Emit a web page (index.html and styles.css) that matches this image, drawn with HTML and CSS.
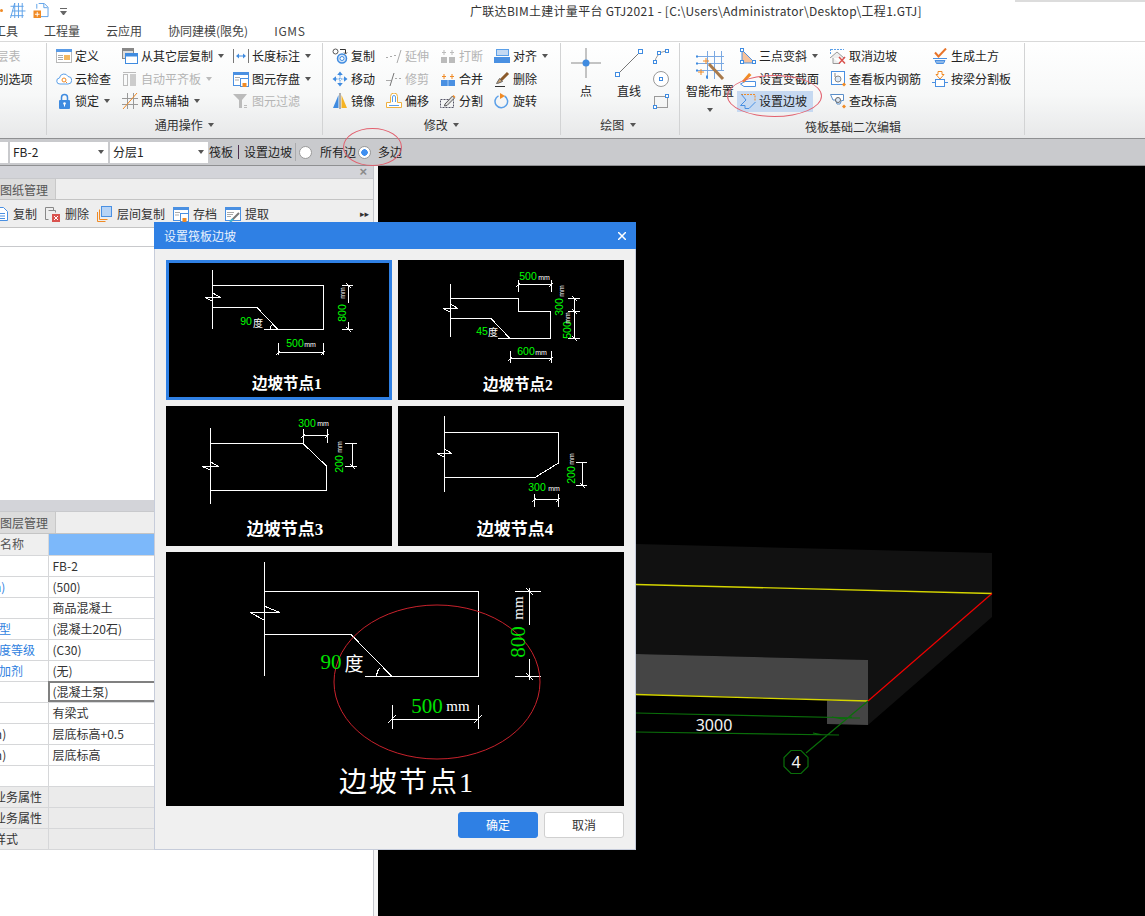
FILE: index.html
```html
<!DOCTYPE html>
<html lang="zh-CN">
<head>
<meta charset="utf-8">
<title>广联达BIM土建计量平台 GTJ2021</title>
<link rel="stylesheet" href="styles.css">
</head>
<body>
<svg class="sprite" aria-hidden="true">
<symbol id="i-def" viewBox="0 0 16 16"><rect x=".5" y="1.5" width="15" height="13" fill="#fff" stroke="#b8b8b8"/><rect y="1" width="16" height="3" fill="#5a9be6"/><path d="M2 7.5h5M2 9.5h5M2 11.5h5" stroke="#aaa"/><rect x="8" y="7" width="6" height="5" fill="#f4b860"/></symbol>
<symbol id="i-cloud" viewBox="0 0 16 16"><path d="M4 13a3 3 0 0 1-.5-6 4.500 4.500 0 0 1 8.500-1.500 3.700 3.700 0 0 1 0 7.500z" fill="#fff" stroke="#5a9fe8"/><circle cx="8" cy="9" r="2" fill="none" stroke="#f08a24"/><path d="M9.500 10.500l1.500 1.500" stroke="#f08a24"/></symbol>
<symbol id="i-lock" viewBox="0 0 16 16"><rect x="3" y="7" width="11" height="9" rx="1" fill="#3f8be0"/><path d="M5.500 7V4.500a3 3 0 0 1 6 0V7" fill="none" stroke="#3f8be0" stroke-width="1.500"/><circle cx="8.500" cy="10.500" r="1.300" fill="#fff"/><path d="M8.500 11v2.500" stroke="#fff"/></symbol>
<symbol id="i-floor" viewBox="0 0 16 16"><rect x=".5" y=".5" width="11" height="10" fill="#ddd" stroke="#888"/><rect width="12" height="3" fill="#888"/><rect x="3.500" y="5.500" width="12" height="10" fill="#fff" stroke="#3f8be0"/><rect x="3" y="5" width="13" height="3.500" fill="#3f8be0"/></symbol>
<symbol id="i-flush" viewBox="0 0 16 16"><path d="M1 1.500h13" stroke="#bbb"/><rect x="1.500" y="3.500" width="4" height="11" fill="none" stroke="#bbb"/><rect x="8" y="3" width="6" height="12" fill="#ccc"/></symbol>
<symbol id="i-axis" viewBox="0 0 16 16"><path d="M5.500 0v16M11.500 0v16M0 5.500h16M0 11.500h16" stroke="#999"/><path d="M1 16L15 0" stroke="#f08a24"/></symbol>
<symbol id="i-len" viewBox="0 0 16 16"><path d="M.5 1v14M15.500 1v14" stroke="#777"/><path d="M4 8h8" stroke="#3f8be0"/><path d="M3 8l3-2.500v5zM13 8l-3-2.500v5z" fill="#3f8be0"/></symbol>
<symbol id="i-save" viewBox="0 0 16 16"><rect x=".5" y="1.500" width="15" height="13" fill="#fff" stroke="#4a90e2"/><rect y="1" width="16" height="3" fill="#4a90e2"/><path d="M2 6.500h5M2 9h4" stroke="#aaa"/><rect x="7.500" y="7.500" width="8" height="8" fill="#fff" stroke="#4a90e2"/><rect x="9.500" y="12" width="4" height="4" fill="#f08a24"/></symbol>
<symbol id="i-filter" viewBox="0 0 16 16"><path d="M0 1h14L9 7v8H6V7z" fill="#bbb"/><path d="M11 12.500h3M11 14.500h3" stroke="#bbb"/></symbol>
<symbol id="i-copy" viewBox="0 0 16 16"><circle cx="3.500" cy="3.500" r="2.500" fill="#fff" stroke="#555"/><circle cx="10" cy="10.500" r="4.500" fill="#d3e4f8" stroke="#3f8be0" stroke-width="1.500"/><circle cx="10" cy="10.500" r="2" fill="#fff" stroke="#3f8be0"/><path d="M8 1.500h5.500V5" fill="none" stroke="#333"/><path d="M12 4.500l1.500 1.500 1.500-1.500" fill="none" stroke="#333"/></symbol>
<symbol id="i-ext" viewBox="0 0 16 16"><path d="M0 9.500h2M4 8.500h2M8 7.500h2" stroke="#aaa"/><path d="M11 15L15 2" stroke="#aaa"/></symbol>
<symbol id="i-move" viewBox="0 0 16 16"><path d="M8 .5l2.800 3.500H5.200zM8 15.500l2.800-3.500H5.200zM.5 8L4 5.200v5.600zM15.500 8L12 5.200v5.600z" fill="#3f8be0"/><path d="M8 4v8M4 8h8" stroke="#3f8be0" stroke-dasharray="1.500 1"/></symbol>
<symbol id="i-trim" viewBox="0 0 16 16"><path d="M0 9.500h5M9 7.500h2M13 7.500h2" stroke="#aaa"/><path d="M4 15L8 2" stroke="#777"/></symbol>
<symbol id="i-mirror" viewBox="0 0 16 16"><path d="M6.500 2v13H1z" fill="#3f8be0"/><path d="M9.500 2v13H15z" fill="#f5b324"/><path d="M8 0v16" stroke="#666"/></symbol>
<symbol id="i-offset" viewBox="0 0 16 16"><path d="M.5 14.500V9.500h4V3.500a3 3 0 0 1 7 0v6h4v5z" fill="#fff" stroke="#eeb040"/><path d="M3 12.500h10M6.500 9V4a1.500 1.500 0 0 1 3 0v5" fill="none" stroke="#5a9fe8"/></symbol>
<symbol id="i-break" viewBox="0 0 16 16"><rect x="1" y="9" width="6" height="6" fill="#bbb"/><rect x="9" y="9" width="6" height="6" fill="#bbb"/><path d="M4 2v5M2 4.500h4M12 2v5M10 4.500h4" stroke="#bbb"/></symbol>
<symbol id="i-merge" viewBox="0 0 16 16"><rect x="1" y="9" width="14" height="6" fill="#4a90e2"/><path d="M8 9v6" stroke="#a9cdf3"/><path d="M4 3v5M2 5.500h4M12 3v5M10 5.500h4" stroke="#f08a24"/></symbol>
<symbol id="i-split" viewBox="0 0 16 16"><path d="M.5 6.500h13v8H.5z" fill="none" stroke="#556" stroke-dasharray="2 1"/><path d="M5 11l7.500-8 2 2L7 12.500l-2.500.5z" fill="#ddd" stroke="#555"/><path d="M12.500 3l1-1 2 2-1 1z" fill="#f08a24"/></symbol>
<symbol id="i-align" viewBox="0 0 16 16"><rect x="2.500" y="1.500" width="12" height="6" fill="#c3d9f3" stroke="#5a9fe8"/><rect y="9" width="16" height="6" fill="#4a90e2"/></symbol>
<symbol id="i-del" viewBox="0 0 16 16"><path d="M7 9L14 2" stroke="#8b5a2b" stroke-width="3"/><path d="M2.500 12.500l3-5 3 3-5 2z" fill="#c9a070" stroke="#666"/><path d="M1 15.500h10" stroke="#333"/></symbol>
<symbol id="i-rot" viewBox="0 0 16 16"><path d="M10.500 3a6.300 6.300 0 1 1-6-.2" fill="none" stroke="#5a9fe8" stroke-width="1.500"/><path d="M6 0v6l5-3z" fill="#f08a24"/></symbol>
<symbol id="i-point" viewBox="0 0 30 30"><path d="M15 0v30M0 15h30" stroke="#8a8a8a"/><circle cx="15" cy="15" r="3.500" fill="#3f8be0"/></symbol>
<symbol id="i-line" viewBox="0 0 30 30"><path d="M4 26L26 4" stroke="#777"/><rect x="1.500" y="24.500" width="4" height="4" fill="#fff" stroke="#3f8be0"/><rect x="24.500" y="1.500" width="4" height="4" fill="#fff" stroke="#3f8be0"/></symbol>
<symbol id="i-arc" viewBox="0 0 16 16"><path d="M2 15a12 12 0 0 1 11-12" fill="none" stroke="#999"/><rect x=".5" y="12.500" width="3" height="3" fill="#fff" stroke="#3f8be0"/><rect x="4.500" y="3.500" width="3" height="3" fill="#fff" stroke="#3f8be0"/><rect x="12.500" y="1.500" width="3" height="3" fill="#fff" stroke="#3f8be0"/></symbol>
<symbol id="i-circ" viewBox="0 0 16 16"><circle cx="8" cy="8" r="7.500" fill="#fff" stroke="#999"/><rect x="6.500" y="6.500" width="3" height="3" fill="#fff" stroke="#3f8be0"/></symbol>
<symbol id="i-rect" viewBox="0 0 16 16"><rect x="1.500" y="3.500" width="13" height="11" fill="none" stroke="#999"/><rect x=".5" y="12.500" width="3" height="3" fill="#fff" stroke="#3f8be0"/><rect x="12.500" y="1.500" width="3" height="3" fill="#fff" stroke="#3f8be0"/></symbol>
<symbol id="i-smart" viewBox="0 0 30 30"><path d="M3 6.500h26M3 13.500h26M3 20.500h26M12.500 1v28M19.500 1v28M26.500 1v20" stroke="#7aa8e2"/><path d="M1 6.500h2M1 13.500h2M1 20.500h2M12 25.500v3" stroke="#3f8be0" stroke-width="2"/><path d="M14 14L28 29" stroke="#a8794a" stroke-width="3"/><path d="M11 8v6M8 11h6M6 19v6M3 22h6" stroke="#f08a24"/></symbol>
<symbol id="i-3pt" viewBox="0 0 16 16"><path d="M2 2V15H15z" fill="#f6c19a" stroke="#4a90e2"/><rect x=".5" y=".5" width="3" height="3" fill="#fff" stroke="#3f8be0"/><rect x=".5" y="12.500" width="3" height="3" fill="#fff" stroke="#3f8be0"/><rect x="12.500" y="12.500" width="3" height="3" fill="#fff" stroke="#3f8be0"/></symbol>
<symbol id="i-sect" viewBox="0 0 16 16"><path d="M5 10.500h10.500v5H4L.5 13z" fill="#fff" stroke="#4a90e2"/><path d="M2 10L9 2l2.500 2L4 11.500z" fill="#f08a24"/></symbol>
<symbol id="i-slope" viewBox="0 0 16 16"><path d="M1 1.500h14V8" fill="none" stroke="#f08a24" stroke-dasharray="2 1"/><path d="M1.500 1.500L6 7 .5 12.500H5v3h4L15.500 9" fill="none" stroke="#4a90e2"/></symbol>
<symbol id="i-cancel" viewBox="0 0 16 16"><path d="M.5 1v5M1 1.500h13" stroke="#5a9fe8" stroke-dasharray="2 1"/><path d="M0 10L7 4l7 6M3 10v5.500h7" fill="#eee" stroke="#999"/><path d="M9 9l6 6.500M15 9l-6 6.500" stroke="#d9534f" stroke-width="1.500"/></symbol>
<symbol id="i-view" viewBox="0 0 16 16"><rect x="1.500" y=".5" width="13" height="13" fill="#fff" stroke="#4a90e2"/><circle cx="8" cy="8" r="3" fill="#dce9f8" stroke="#888"/><path d="M5 2v4" stroke="#888"/><path d="M14 11.500l2 2-2 2-2-2z" fill="#f08a24"/></symbol>
<symbol id="i-elev" viewBox="0 0 16 16"><path d="M.5 1.500h13v6h-2L10 11H7L5.500 7H3z" fill="#fff" stroke="#5a8ec8"/><circle cx="8" cy="7" r="2.500" fill="#dce9f8" stroke="#666"/><path d="M14 11.500l2 2-2 2-2-2z" fill="#f08a24"/></symbol>
<symbol id="i-soil" viewBox="0 0 16 16"><path d="M3 4.500l3.500 4L14 .5" fill="none" stroke="#e8742a" stroke-width="2"/><path d="M1 10.500h14M3 12.500h10l-1.500 3h-7z" fill="#8fb8e8" stroke="#4a90e2"/></symbol>
<symbol id="i-beam" viewBox="0 0 16 16"><path d="M6 .5h4v3h2L8 8 4 3.500h2z" fill="#fff" stroke="#f08a24"/><path d="M0 11.500h3M13 11.500h3" stroke="#4a90e2"/><rect x="3.500" y="8.500" width="9" height="7" fill="#fff" stroke="#4a90e2"/></symbol>
<symbol id="i-grid" viewBox="0 0 16 16"><path d="M0 3.500h14M2 8.500h14M0 13.500h14M4.500 0v16M8.500 0v16M12.500 0v16" stroke="#5a9fe8"/><path d="M0 16L4.500 0" stroke="#5a9fe8"/></symbol>
<symbol id="i-new" viewBox="0 0 16 16"><path d="M5.500 .5h6l4 4v10H8" fill="#fff" stroke="#5a9fe8"/><path d="M3.500 1v5M11 1v4h4" fill="none" stroke="#5a9fe8"/><rect y="8" width="8" height="8" fill="#f08a24"/><path d="M4 9.500v5M1.500 12h5" stroke="#fff"/></symbol>
<symbol id="i-doc" viewBox="0 0 16 16"><path d="M1.500 1.500h9l4 4v9h-13z" fill="#fff" stroke="#4a90e2"/><path d="M4 7.500h8M4 10h8M4 12.500h8" stroke="#4a90e2"/></symbol>
<symbol id="i-rm" viewBox="0 0 16 16"><path d="M3.500 13.500H.5v-12h8v3" fill="none" stroke="#888"/><path d="M3.500 4.500h7v2" fill="none" stroke="#888"/><rect x="7" y="8" width="8" height="8" fill="#d9534f"/><path d="M9 10l4 4M13 10l-4 4" stroke="#fff"/></symbol>
<symbol id="i-layer" viewBox="0 0 16 16"><rect x="4.500" y=".5" width="10" height="10" fill="#b7d4f6" stroke="#4a90e2"/><path d="M2.500 3.500v10h8M.5 6v9.500h8" fill="none" stroke="#f08a24"/></symbol>
<symbol id="i-pick" viewBox="0 0 16 16"><rect x=".5" y="1.500" width="15" height="13" fill="#fff" stroke="#4a90e2"/><rect y="1" width="16" height="3" fill="#4a90e2"/><path d="M2 6.500h7M2 8.500h6M2 10.500h4" stroke="#aaa"/><path d="M6 15l8-8" stroke="#777" stroke-width="2"/><path d="M5 16l3-3" stroke="#3fb6d6" stroke-width="2"/></symbol>
</svg>

<header class="titlebar">
  <div class="quick">
    <span class="dot"></span>
    <svg class="ic"><use href="#i-grid"/></svg>
    <svg class="ic"><use href="#i-new"/></svg>
    <span class="qmore"></span>
  </div>
  <div class="title">广联达BIM土建计量平台 GTJ2021 - [C:\Users\Administrator\Desktop\工程1.GTJ]</div>
</header>
<nav class="tabs">
  <span>工具</span><span>工程量</span><span>云应用</span><span>协同建模(限免)</span><span class="latin">IGMS</span>
</nav>

<section class="ribbon">
  <div class="group g1">
    <div class="body">
      <div class="clip off">楼层表</div>
      <div class="clip">识别选项</div>
    </div>
  </div>
  <div class="group g2">
    <div class="body">
      <div class="item"><svg class="ic"><use href="#i-def"/></svg>定义</div>
      <div class="item"><svg class="ic"><use href="#i-cloud"/></svg>云检查</div>
      <div class="item"><svg class="ic"><use href="#i-lock"/></svg>锁定<i class="caret"></i></div>
      <div class="item"><svg class="ic"><use href="#i-floor"/></svg>从其它层复制<i class="caret"></i></div>
      <div class="item off"><svg class="ic"><use href="#i-flush"/></svg>自动平齐板<i class="caret lite"></i></div>
      <div class="item"><svg class="ic"><use href="#i-axis"/></svg>两点辅轴<i class="caret"></i></div>
      <div class="item"><svg class="ic"><use href="#i-len"/></svg>长度标注<i class="caret"></i></div>
      <div class="item"><svg class="ic"><use href="#i-save"/></svg>图元存盘<i class="caret"></i></div>
      <div class="item off"><svg class="ic"><use href="#i-filter"/></svg>图元过滤</div>
    </div>
    <div class="label">通用操作<i class="caret"></i></div>
  </div>
  <div class="group g3">
    <div class="body">
      <div class="item"><svg class="ic"><use href="#i-copy"/></svg>复制</div>
      <div class="item"><svg class="ic"><use href="#i-move"/></svg>移动</div>
      <div class="item"><svg class="ic"><use href="#i-mirror"/></svg>镜像</div>
      <div class="item off"><svg class="ic"><use href="#i-ext"/></svg>延伸</div>
      <div class="item off"><svg class="ic"><use href="#i-trim"/></svg>修剪</div>
      <div class="item"><svg class="ic"><use href="#i-offset"/></svg>偏移</div>
      <div class="item off"><svg class="ic"><use href="#i-break"/></svg>打断</div>
      <div class="item"><svg class="ic"><use href="#i-merge"/></svg>合并</div>
      <div class="item"><svg class="ic"><use href="#i-split"/></svg>分割</div>
      <div class="item"><svg class="ic"><use href="#i-align"/></svg>对齐<i class="caret"></i></div>
      <div class="item"><svg class="ic"><use href="#i-del"/></svg>删除</div>
      <div class="item"><svg class="ic"><use href="#i-rot"/></svg>旋转</div>
    </div>
    <div class="label">修改<i class="caret"></i></div>
  </div>
  <div class="group g4">
    <div class="body">
      <div class="big"><svg class="ic30"><use href="#i-point"/></svg><span class="bigtext">点</span></div>
      <div class="big"><svg class="ic30"><use href="#i-line"/></svg><span class="bigtext">直线</span></div>
      <div class="item"><svg class="ic"><use href="#i-arc"/></svg></div>
      <div class="item"><svg class="ic"><use href="#i-circ"/></svg></div>
      <div class="item"><svg class="ic"><use href="#i-rect"/></svg></div>
    </div>
    <div class="label">绘图<i class="caret"></i></div>
  </div>
  <div class="group g5">
    <div class="body">
      <div class="big smart"><svg class="ic30"><use href="#i-smart"/></svg><span class="bigtext">智能布置</span><i class="caret"></i></div>
      <div class="item"><svg class="ic"><use href="#i-3pt"/></svg>三点变斜<i class="caret"></i></div>
      <div class="item"><svg class="ic"><use href="#i-sect"/></svg>设置变截面</div>
      <div class="item hl"><svg class="ic"><use href="#i-slope"/></svg>设置边坡</div>
      <div class="item"><svg class="ic"><use href="#i-cancel"/></svg>取消边坡</div>
      <div class="item"><svg class="ic"><use href="#i-view"/></svg>查看板内钢筋</div>
      <div class="item"><svg class="ic"><use href="#i-elev"/></svg>查改标高</div>
      <div class="item"><svg class="ic"><use href="#i-soil"/></svg>生成土方</div>
      <div class="item"><svg class="ic"><use href="#i-beam"/></svg>按梁分割板</div>
    </div>
    <div class="label">筏板基础二次编辑</div>
  </div>
</section>

<section class="optbar">
  <div class="combo first"><i class="caret"></i></div>
  <div class="combo">FB-2<i class="caret"></i></div>
  <div class="combo">分层1<i class="caret"></i></div>
  <span class="opt-a">筏板</span><span class="opt-bar"></span><span>设置边坡</span><span class="opt-sep"></span>
  <span class="radio"></span><span class="opt-l">所有边</span>
  <span class="radio on"></span><span class="opt-l2">多边</span>
</section>

<main class="main">
  <aside class="left">
    <div class="panel top">
      <div class="pbar"><span class="px">×</span></div>
      <div class="ptabs"><span class="ptab">图纸管理</span></div>
      <div class="ptools">
        <span class="ptool"><svg class="ic"><use href="#i-doc"/></svg>复制</span>
        <span class="ptool"><svg class="ic"><use href="#i-rm"/></svg>删除</span>
        <span class="ptool"><svg class="ic"><use href="#i-layer"/></svg>层间复制</span>
        <span class="ptool"><svg class="ic"><use href="#i-save"/></svg>存档</span>
        <span class="ptool"><svg class="ic"><use href="#i-pick"/></svg>提取</span>
        <span class="pmore">▸▸</span>
      </div>
      <div class="prow"></div>
    </div>
    <div class="panel bottom">
      <div class="pbar"></div>
      <div class="ptabs"><span class="ptab">图层管理</span></div>
      <table class="props">
        <tr class="head"><td><span class="hn">属性名称</span></td><td class="val"></td></tr>
        <tr><td><span class="n">名称</span></td><td class="val">FB-2</td></tr>
        <tr><td><span class="n blue">厚度(mm)</span></td><td class="val">(500)</td></tr>
        <tr><td><span class="n">材质</span></td><td class="val">商品混凝土</td></tr>
        <tr><td><span class="n blue">混凝土类型</span></td><td class="val">(混凝土20石)</td></tr>
        <tr><td><span class="n blue">混凝土强度等级</span></td><td class="val">(C30)</td></tr>
        <tr><td><span class="n blue">混凝土外加剂</span></td><td class="val">(无)</td></tr>
        <tr><td><span class="n">泵送类型</span></td><td class="val focus">(混凝土泵)</td></tr>
        <tr><td><span class="n">类别</span></td><td class="val">有梁式</td></tr>
        <tr><td><span class="n">顶标高(m)</span></td><td class="val">层底标高+0.5</td></tr>
        <tr><td><span class="n">底标高(m)</span></td><td class="val">层底标高</td></tr>
        <tr><td><span class="n">备注</span></td><td class="val"></td></tr>
        <tr class="grp"><td><span class="g">钢筋业务属性</span></td><td class="val"></td></tr>
        <tr class="grp"><td><span class="g">土建业务属性</span></td><td class="val"></td></tr>
        <tr class="grp"><td><span class="g">显示样式</span></td><td class="val"></td></tr>
      </table>
    </div>
  </aside>
  <div class="canvas">
    <svg class="scene" viewBox="378 166 767 750">
      <path d="M636 544L992 553V617L868 725V660L636 654z" fill="#111"/>
      <path d="M636 654L868 660V701L636 694z" fill="#454545"/>
      <path d="M827 700.500L868 701V725L827 724z" fill="#454545"/>
      <path d="M636 584.500L992 593.500M636 694.500L868 701" stroke="#d6d600" fill="none" stroke-width="1.300"/>
      <path d="M868 701L992 593.500" stroke="#f00000" fill="none" stroke-width="1.200"/>
      <path d="M868 701L806 753M636 713L860 718M636 732L839 735M832 717l10 2 10-2M813 733l10 2" stroke="#0a6e0a" fill="none" stroke-width="1.200"/>
      <path d="M791 750.500h10l7 7v9l-7 7h-10l-7-7v-9z" fill="#000" stroke="#0a6e0a" stroke-width="1.200"/>
      <text class="scene-t" x="796" y="768">4</text>
      <text class="scene-t" x="714" y="731">3000</text>
    </svg>
  </div>
</main>

<section class="dialog">
  <div class="dhead"><span>设置筏板边坡</span><svg class="dx" viewBox="0 0 8 8"><path d="M0 0L8 8M8 0L0 8"/></svg></div>
  <div class="dbody">
    <div class="tiles">
      <div class="tile sel">
        <svg class="d" viewBox="0 0 226 140">
          <path class="ln" d="M46.500 10V69M46.500 25.500H157.500V69.500H98M46.500 47.500H91L112 69.500M39 37.500H55M46.500 33L55 37.500M39 37.500L46.500 41M104 69A8 8 0 0 1 107 64"/>
          <path class="ln" d="M182.500 25V43M182.500 62V70M176 25.500H187M176 69.500H187M180 23l5 5M180 67l5 5M112.500 83V95M157.500 83V95M112 92.500H157M110 95l4-4M155 95l4-4"/>
          <text class="gr" transform="rotate(-90 176 53)" x="176" y="53">800</text>
          <text class="mm" transform="rotate(-90 176 33)" x="176" y="33">mm</text>
          <text class="gr" x="129" y="83">500</text><text class="mm" x="144" y="84">mm</text>
          <text class="gr" x="80" y="61">90</text><text class="wh" x="92" y="62">度</text>
          <text class="tt" x="121" y="123">边坡节点1</text>
        </svg>
      </div>
      <div class="tile">
        <svg class="d" viewBox="0 0 226 140">
          <path class="ln" d="M52.500 24V77M52.500 38.500H120.500V51.500H152.500V78.500H100M52.500 58.500H93L112 78.500M45 48.500H60M52.500 44L60 48.500M45 48.500L52.500 52"/>
          <path class="ln" d="M120 24.500H153M120.500 20V32M153.500 20V32M118 27l4-4M151 27l4-4M176.500 38V79M170 38.500H182M170 51.500H182M170 78.500H182M174 36l5 5M174 49l5 5M174 76l5 5M112.500 91V103M153.500 91V103M112 98.500H153M110 101l4-4M151 101l4-4"/>
          <text class="gr" x="130" y="16">500</text><text class="mm" x="146" y="17">mm</text>
          <text class="gr" transform="rotate(-90 161 47)" x="161" y="47">300</text>
          <text class="mm" transform="rotate(-90 163 31)" x="163" y="31">mm</text>
          <text class="gr" transform="rotate(-90 169 70)" x="169" y="70">500</text>
          <text class="mm" transform="rotate(-90 169 58)" x="169" y="58">mm</text>
          <text class="gr" x="128" y="91">600</text><text class="mm" x="143" y="92">mm</text>
          <text class="gr" x="84" y="71">45</text><text class="wh" x="95" y="71">度</text>
          <text class="tt" x="120" y="124">边坡节点2</text>
        </svg>
      </div>
      <div class="tile">
        <svg class="d" viewBox="0 0 226 140">
          <path class="ln" d="M44.500 22V98M44.500 37.500H137L160.500 60V84.500H44M36 60.500H53M44.500 56L53 60.500M36 60.500L44.500 64"/>
          <path class="ln" d="M137 29.500H161M137.500 23V37M161.500 23V37M135 32l4-4M159 32l4-4M186.500 37V61M179 37.500H191M179 60.500H191M184 58l5 5"/>
          <text class="gr" x="141" y="17">300</text><text class="mm" x="157" y="17">mm</text>
          <text class="gr" transform="rotate(-90 173 58)" x="173" y="58">200</text>
          <text class="mm" transform="rotate(-90 173 41)" x="173" y="41">mm</text>
          <text class="tt wide" x="119" y="123">边坡节点3</text>
        </svg>
      </div>
      <div class="tile">
        <svg class="d" viewBox="0 0 226 140">
          <path class="ln" d="M46.500 10V86M46.500 26.500H160.500V57L137 71.500H46M39 47.500H54M46.500 43L54 47.500M39 47.500L46.500 51"/>
          <path class="ln" d="M184.500 56V79M178 56.500H189M178 79.500H189M182 77l5 5M136 93.500H160M136.500 88V101M160.500 88V101M134 96l4-4M158 96l4-4"/>
          <text class="gr" transform="rotate(-90 173 69)" x="173" y="69">200</text>
          <text class="mm" transform="rotate(-90 173 53)" x="173" y="53">mm</text>
          <text class="gr" x="139" y="81">300</text><text class="mm" x="156" y="82">mm</text>
          <text class="tt wide" x="117" y="123">边坡节点4</text>
        </svg>
      </div>
    </div>
    <div class="preview">
      <svg class="d" viewBox="0 0 458 254">
        <path class="ln" d="M98.500 10V124M98.500 39.500H312.500V124.500H199M98.500 82.500H185L226 124.500M84 60.500H114M98 54L114 60.500M84 60.500L98 68M214 116A9 9 0 0 0 211 124"/>
        <path class="ln" d="M363.500 36V73M363.500 107V128M349 39.500H375M349 124.500H375M360 36l7 7M360 121l7 7M226.500 153V177M312.500 153V177M226 167.500H312M222 171l8-8M308 171l8-8"/>
        <ellipse class="red" cx="271" cy="130" rx="103" ry="77"/>
        <text class="gr2" x="165" y="110">90</text><text class="wh2" x="188" y="110">度</text>
        <text class="gr2" x="261" y="154">500</text><text class="mm2" x="292" y="154">mm</text>
        <text class="gr2" transform="rotate(-90 352 90)" x="352" y="90">800</text>
        <text class="mm2" transform="rotate(-90 352 56)" x="352" y="56">mm</text>
        <text class="tt2" x="241" y="230">边坡节点1</text>
      </svg>
    </div>
    <div class="dfoot">
      <button class="btn ok">确定</button>
      <button class="btn">取消</button>
    </div>
  </div>
</section>

<div class="mark mark-ribbon"></div>
<div class="mark mark-opt"></div>
<div class="topshade"></div>
</body>
</html>
```

FILE: styles.css
```css
* { box-sizing: border-box; }
html, body { margin: 0; padding: 0; }
body {
  position: relative;
  width: 1145px;
  height: 916px;
  overflow: hidden;
  display: flex;
  flex-direction: column;
  background: #fff;
  color: #222;
  font: 12px/16px "Noto Sans CJK SC", "Liberation Sans", sans-serif;
}
.sprite { display: none; }
.ic { width: 16px; height: 16px; flex: none; display: block; }
.ic30 { width: 30px; height: 30px; flex: none; display: block; }

/* title + tabs */
.titlebar { height: 21px; display: flex; align-items: center; flex: none; }
.quick { width: 470px; display: flex; align-items: center; gap: 7px; flex: none; }
.quick .ic { height: 15px; }
.dot { width: 3px; height: 3px; background: #f08a24; border-radius: 50%; }
.qmore { width: 7px; height: 6px; margin-left: 4px; border-top: 1px solid #666; }
.qmore::after { content: ""; display: block; margin-top: 2px; border: 3px solid transparent; border-top: 4px solid #666; border-bottom: 0; }
.title { white-space: nowrap; color: #333; letter-spacing: .3px; }
.tabs { height: 20px; flex: none; display: flex; gap: 26px; margin-left: -6px; align-items: center; color: #444; }
.latin { letter-spacing: .7px; }

/* ribbon */
.ribbon {
  height: 97px;
  flex: none;
  display: flex;
  border-top: 1px solid #d9d9d9;
  background: linear-gradient(#fff, #f7f8f8 55%, #e7e8e9);
}
.group { margin: 1px 0 3px; border-right: 1px solid #d2d3d4; display: flex; flex-direction: column; flex: none; }
.body {
  height: 70px;
  padding-top: 2px;
  display: grid;
  grid-auto-flow: column;
  grid-template-rows: repeat(3, 22.5px);
}
.label { height: 22px; padding-top: 2px; display: flex; align-items: center; justify-content: center; color: #333; }
.item { display: flex; align-items: center; gap: 3px; white-space: nowrap; }
.off { color: #b4b4b4; }
.caret {
  display: block;
  flex: none;
  width: 0;
  height: 0;
  margin-left: 5.500px;
  border-style: solid;
  border-width: 4px 3.500px 0;
  border-color: #555 transparent transparent;
}
.item .caret { margin-left: 1.500px; }
.caret.lite { border-top-color: #bbb; }
.g1 { width: 47px; overflow: hidden; }
.clip { margin-left: -15.500px; white-space: nowrap; display: flex; align-items: center; }
.g2 { width: 276px; }
.g2 .body { padding-left: 9px; grid-template-columns: 66px 111px auto; }
.g3 { width: 238px; }
.g3 .body { padding-left: 9px; grid-template-columns: 54px 54px 54px auto; }
.g4 { width: 119px; }
.g4 .body { padding-left: 10px; grid-template-columns: 43px 39px 16px; }
.g4 .label { padding-right: 4px; }
.g5 { width: 345px; }
.g5 .body { padding-left: 6px; grid-template-columns: 54px 90px 102px auto; }
.g5 .label { padding: 5px 0 0 2px; }
.big { grid-row: 1 / 4; display: flex; flex-direction: column; align-items: center; width: 30px; padding-top: 3px; }
.bigtext { margin-top: 5px; white-space: nowrap; }
.smart { width: 48px; padding-top: 5px; }
.smart .bigtext { margin-top: 3px; }
.smart .caret { margin: 9px 0 0; }
.hl { background: #c6d9f1; margin: 1px 0 1px -3px; padding: 0 6px 0 3px; width: fit-content; }

/* option bar */
.optbar {
  height: 28px;
  flex: none;
  display: flex;
  align-items: center;
  background: #c9cacd;
  border-top: 1px solid #8f9092;
  border-bottom: 1px solid #8f9092;
  white-space: nowrap;
}
.combo {
  width: 98px;
  height: 21px;
  margin-right: 2px;
  padding-left: 3px;
  background: #fff;
  display: flex;
  align-items: center;
  justify-content: space-between;
  flex: none;
}
.combo .caret { margin-right: 4px; }
.combo.first { margin-left: -90px; }
.opt-a { margin-left: -1px; }
.opt-bar { width: 1px; height: 14px; margin: 0 5px; background: #503050; }
.opt-sep { width: 1px; height: 18px; margin: 0 3px; background: #aaabae; }
.radio { width: 13px; height: 13px; flex: none; border-radius: 50%; background: #fff; border: 1px solid #9a9a9a; }
.radio.on { background: radial-gradient(circle, #3f8ff0 0 3px, #fff 3.500px); }
.opt-l { margin: 0 2px 0 8px; }
.opt-l2 { margin-left: 7px; }

/* main */
.main { flex: 1; min-height: 0; display: flex; }
.left { width: 378px; flex: none; display: flex; flex-direction: column; background: #f5f5f5; }
.panel { width: 374px; background: #fff; border-right: 1px solid #c4c6cc; }
.panel.top { height: 334px; flex: none; }
.panel.bottom { flex: 1; }
.pbar { height: 13px; background: #d3d4d9; text-align: right; padding-right: 6px; border-bottom: 1px solid #c8c9cc; }
.panel.bottom .pbar { height: 12px; }
.px { font: bold 13px/12px "Liberation Sans", sans-serif; color: #8a8a8a; display: block; }
.ptabs { height: 22px; background: #eee; border-bottom: 1px solid #c4c4c4; display: flex; }
.panel.top .ptabs { height: 21px; }
.ptab { width: 56px; background: #dcdcdc; border-right: 1px solid #c8c8c8; color: #555; line-height: 21px; overflow: hidden; }
.ptools { height: 28px; background: #eee; border-bottom: 1px solid #c4c4c4; display: flex; align-items: center; gap: 8px; margin-left: -7px; padding-top: 1px; }
.ptool { display: flex; align-items: center; gap: 4px; white-space: nowrap; color: #333; }
.pmore { margin-left: auto; padding-right: 4px; font: 9px/10px "DejaVu Sans", sans-serif; color: #333; }
.prow { height: 19px; border-bottom: 1px solid #c8c9cc; }

.props { width: 373px; table-layout: fixed; border-collapse: collapse; }
.props td { height: 21px; padding: 0; border-bottom: 1px solid #d6d7d9; overflow: hidden; white-space: nowrap; }
.props td:first-child { width: 48px; border-right: 1px solid #d6d7d9; }
.props .val { padding-left: 4px; color: #333; }
.props .focus { outline: 2px solid #808080; outline-offset: -2px; }
.head td { background: #efefef; color: #555; }
.head .val { background: #7cb8fa; }
.grp td { background: #ebebeb; }
.n { display: inline-block; margin-left: -49px; color: #333; }
.n.blue { color: #2f7fe0; }
.hn { display: inline-block; margin-left: -24px; }
.g { display: inline-block; margin-left: -30px; color: #333; }

.canvas { flex: 1; background: #000; min-width: 0; }
.scene { display: block; width: 767px; height: 750px; }
.scene-t { fill: #f4f4f4; font: 16px "Noto Sans", "Liberation Sans", sans-serif; text-anchor: middle; }

/* dialog */
.dialog {
  position: absolute;
  left: 154px;
  top: 222px;
  width: 482px;
  height: 628px;
  background: #f0f0f0;
  border: 1px solid #c6ccda;
  border-top: 0;
  display: flex;
  flex-direction: column;
}
.dhead {
  height: 27px;
  flex: none;
  margin: 0 -1px;
  padding: 0 10px;
  background: #2f80e4;
  color: #e8f1fd;
  display: flex;
  align-items: center;
  justify-content: space-between;
}
.dx { width: 8px; height: 8px; stroke: #fff; stroke-width: 1.500; fill: none; }
.dbody { padding: 11px 11px 0; display: flex; flex-direction: column; gap: 6px; }
.tiles { display: grid; grid-template-columns: 226px 226px; grid-template-rows: 140px 140px; gap: 6px; }
.tile { background: #000; }
.tile.sel { outline: 3px solid #2f80e4; outline-offset: -3px; }
.preview { height: 254px; background: #000; }
.d { display: block; width: 100%; height: 100%; }
.d text { text-anchor: middle; dominant-baseline: central; }
.ln { fill: none; stroke: #fff; stroke-width: 1; shape-rendering: crispEdges; }
.red { fill: none; stroke: #c8222c; stroke-width: 1; }
.gr { fill: #00ff00; font: 10.500px "Liberation Sans", sans-serif; }
.mm { fill: #fff; font: 7px "Liberation Sans", sans-serif; }
.wh { fill: #fff; font: 10px "Noto Sans CJK SC", sans-serif; }
.tt { fill: #fff; font: bold 15.500px "Liberation Serif", "Noto Sans CJK SC", serif; }
.tt.wide { font-size: 17px; }
.gr2 { fill: #00e000; font: 21px "Liberation Serif", serif; }
.wh2 { fill: #fff; font: 19px "Noto Sans CJK SC", serif; }
.mm2 { fill: #fff; font: 15px "Liberation Serif", serif; }
.tt2 { fill: #fff; font: 28px "Liberation Serif", "Noto Sans CJK SC", serif; letter-spacing: 2px; }
.dfoot { display: flex; justify-content: flex-end; gap: 6px; }
.btn {
  width: 80px;
  height: 26px;
  padding: 0;
  background: #fff;
  border: 1px solid #d0d0d0;
  border-radius: 3px;
  color: #333;
  font: inherit;
}
.btn.ok { background: #2f80e4; border-color: #2f80e4; color: #fff; }

/* hand-drawn red annotations over the screenshot */
.mark { position: absolute; border: 1px solid #e2606e; border-radius: 50%; pointer-events: none; }
.mark-ribbon { left: 727px; top: 75px; width: 95px; height: 42px; }
.mark-opt { left: 343px; top: 128px; width: 59px; height: 38px; }
.topshade { position: absolute; right: 0; top: 0; width: 130px; height: 2px; background: #dcdcdc; }
```
